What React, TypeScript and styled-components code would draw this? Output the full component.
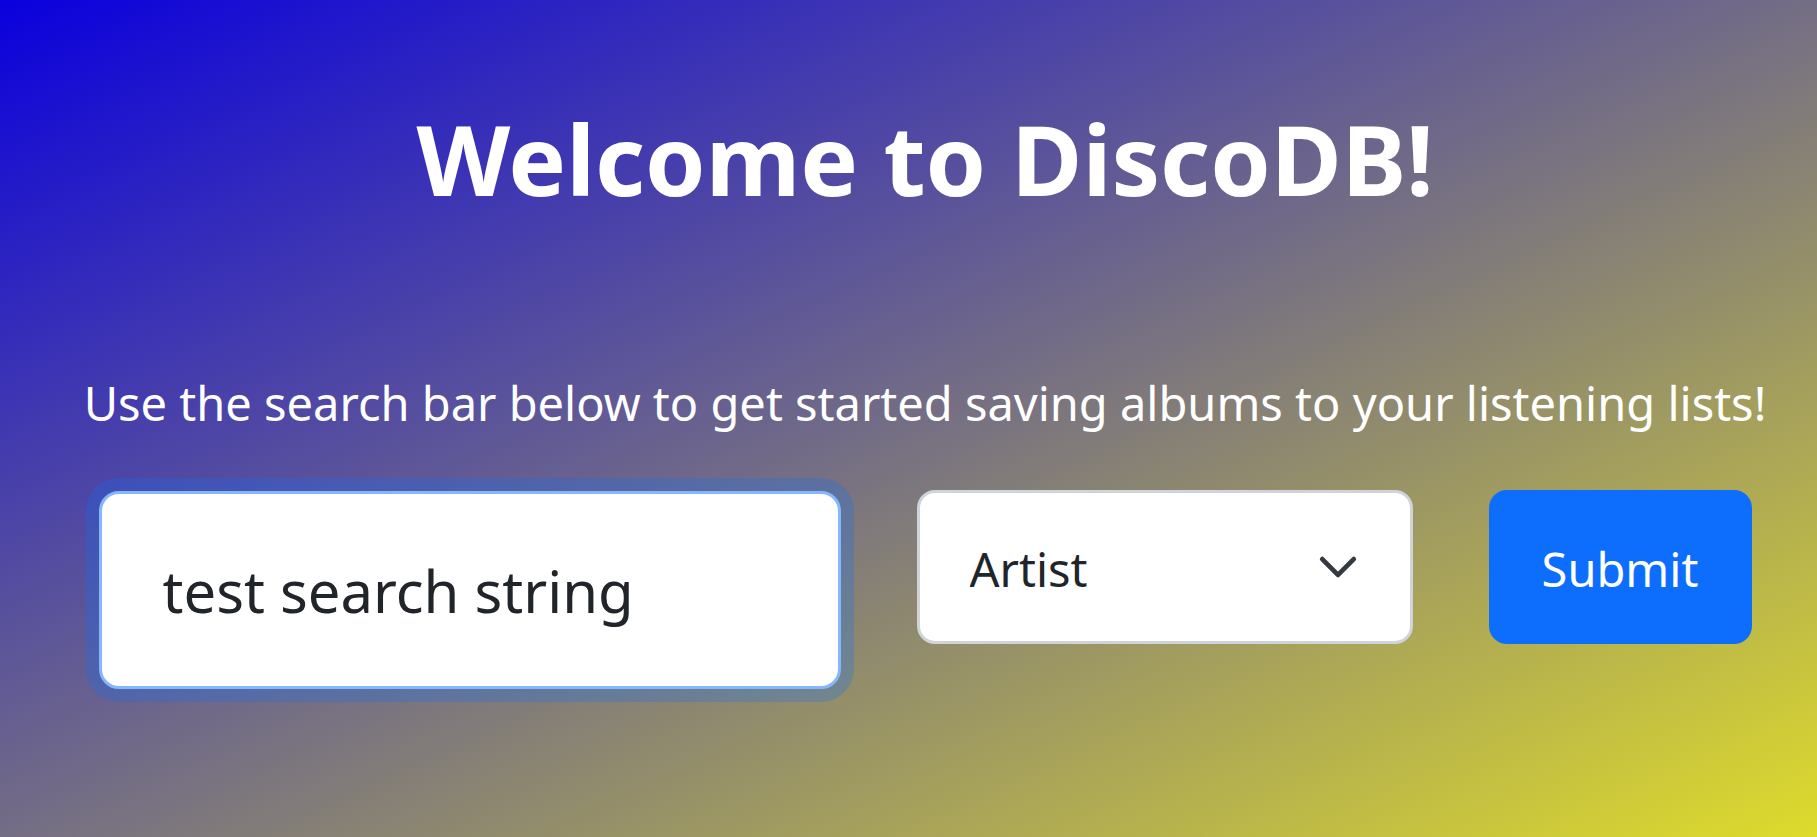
import React from "react";
import styled, { createGlobalStyle } from "styled-components";

const GlobalStyle = createGlobalStyle`
  html, body {
    margin: 0;
    padding: 0;
  }
  body {
    font-family: "Noto Sans", "Open Sans", sans-serif;
  }
  * {
    box-sizing: border-box;
  }
`;

const Page = styled.main`
  min-height: 100vh;
  padding: 110px 0 0 33px;
  background: linear-gradient(to bottom right, #0a00de 0%, #dedb2c 100%);
  display: flex;
  flex-direction: column;
  align-items: center;
`;

const Title = styled.h1`
  margin: 0;
  font-size: 97px;
  line-height: 1;
  font-weight: 700;
  color: #ffffff;
  text-align: center;
`;

const Lead = styled.p`
  margin: 173px 0 0;
  font-size: 47px;
  line-height: 1;
  font-weight: 400;
  color: #ffffff;
  text-align: center;
  white-space: nowrap;
`;

const SearchRow = styled.form`
  margin-top: 63px;
  display: flex;
  align-items: flex-start;
  gap: 76px;
`;

const SearchInput = styled.input`
  width: 742px;
  height: 198px;
  margin-top: 1px;
  padding: 0 24px 0 61px;
  border: 3px solid #86b7fe;
  border-radius: 20px;
  background: #ffffff;
  color: #212529;
  font-family: inherit;
  font-size: 58px;
  outline: none;
  box-shadow: 0 0 0 13px rgba(13, 110, 253, 0.25);
`;

const SelectWrap = styled.div`
  position: relative;
  width: 496px;
  height: 154px;
`;

const Select = styled.select`
  width: 100%;
  height: 100%;
  padding: 4px 120px 0 50px;
  border: 3px solid #ced4da;
  border-radius: 18px;
  background: #ffffff;
  color: #212529;
  font-family: inherit;
  font-size: 47px;
  appearance: none;
  -webkit-appearance: none;
  outline: none;
`;

const Chevron = styled.svg`
  position: absolute;
  right: 54px;
  top: 50%;
  width: 42px;
  height: 42px;
  transform: translateY(-50%);
  pointer-events: none;
`;

const SubmitButton = styled.button`
  width: 263px;
  height: 154px;
  padding: 4px 0 0;
  border: none;
  border-radius: 18px;
  background: #0d6efd;
  color: #ffffff;
  font-family: inherit;
  font-size: 47px;
  cursor: pointer;
`;

export default function App() {
  return (
    <>
      <GlobalStyle />
      <Page>
        <Title>Welcome to DiscoDB!</Title>
        <Lead>Use the search bar below to get started saving albums to your listening lists!</Lead>
        <SearchRow onSubmit={(e) => e.preventDefault()}>
          <SearchInput type="text" defaultValue="test search string" />
          <SelectWrap>
            <Select defaultValue="artist">
              <option value="artist">Artist</option>
              <option value="album">Album</option>
            </Select>
            <Chevron viewBox="0 0 16 16" fill="none">
              <path
                d="m2 5 6 6 6-6"
                stroke="#343a40"
                strokeWidth="1.8"
                strokeLinecap="round"
                strokeLinejoin="round"
              />
            </Chevron>
          </SelectWrap>
          <SubmitButton type="submit">Submit</SubmitButton>
        </SearchRow>
      </Page>
    </>
  );
}
